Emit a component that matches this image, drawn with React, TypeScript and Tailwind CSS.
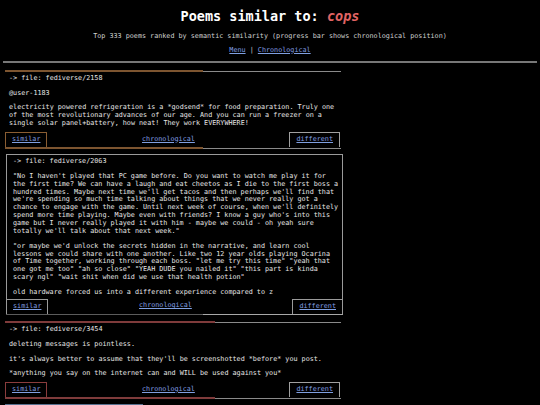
import React from "react";

const MONO = "font-['DejaVu_Sans_Mono','Liberation_Mono',monospace]";

function Bar({ pct, fill, track = "bg-[#8a8a8a]" }: { pct: number; fill: string; track?: string }) {
  return (
    <div className="flex h-[2px] items-end">
      <div className={`h-[2px] ${fill}`} style={{ width: `${pct}%` }} />
      <div className={`h-px flex-1 ${track}`} />
    </div>
  );
}

function Link({ children }: { children: React.ReactNode }) {
  return <a href="#" className="text-[#809fe0] underline underline-offset-[1px]">{children}</a>;
}

function Actions({ simBorder }: { simBorder: string }) {
  return (
    <div className="mt-[4px] flex h-[15px] items-stretch justify-between pr-[1px]">
      <span className={`flex items-center border-x border-t px-[6px] ${simBorder}`}>
        <Link>similar</Link>
      </span>
      <span className="flex items-center">
        <Link>chronological</Link>
      </span>
      <span className="flex items-center border-x border-t border-[#a0a0a0] px-[6px]">
        <Link>different</Link>
      </span>
    </div>
  );
}

export default function App() {
  return (
    <div className={`min-h-[405px] bg-black pb-[20px] text-[6.75px] leading-[7.86px] text-[#e6e6e6] ${MONO}`}>
      <header className="pt-[7px] text-center">
        <h1 className="text-[13.5px] font-bold leading-[18px] text-white">
          Poems similar to: <span className="italic text-[#e06464]">cops</span>
        </h1>
        <p className="mt-[8px] text-[#d0d0d0]">
          Top 333 poems ranked by semantic similarity (progress bar shows chronological position)
        </p>
        <nav className="mt-[6px]">
          <Link>Menu</Link> <span className="text-[#cfcfcf]">|</span> <Link>Chronological</Link>
        </nav>
      </header>
      <div className="mx-[3px] mt-[6px] h-[2px] bg-[#777]" />

      <main className="flex flex-col px-[5px]">
        {/* fediverse/2158 */}
        <article className="mt-[7px] w-[336px]">
          <Bar pct={58.9} fill="bg-[#7d5530]" />
          <div className="pl-[4px] pr-[5px] pt-[3px]">
            <p>-&gt; file: fediverse/2158</p>
            <p className="mt-[7px]">@user-1183</p>
            <p className="mt-[7px]">
              electricity powered refrigeration is a *godsend* for food preparation. Truly one of the most
              revolutionary advances of our age. And you can run a freezer on a single solar panel+battery, how
              neat! They work EVERYWHERE!
            </p>
          </div>
          <Actions simBorder="border-[#8a5d32]" />
          <Bar pct={58.9} fill="bg-[#7d5530]" />
        </article>

        {/* fediverse/2063, open entry */}
        <article className="ml-[1px] mt-[5px] w-[337px]">
          <div className="border-x border-t border-[#9a9a9a]">
            <div className="pl-[6px] pr-[2px] pt-[3px]">
              <p>-&gt; file: fediverse/2063</p>
              <p className="mt-[7px]">
                "No I haven't played that PC game before. Do you want to watch me play it for the first time? We
                can have a laugh and eat cheetos as I die to the first boss a hundred times. Maybe next time we'll
                get tacos and then perhaps we'll find that we're spending so much time talking about things that
                we never really got a chance to engage with the game. Until next week of course, when we'll
                definitely spend more time playing. Maybe even with friends? I know a guy who's into this game but
                I never really played it with him - maybe we could - oh yeah sure totally we'll talk about that
                next week."
              </p>
              <p className="mt-[7px]">
                "or maybe we'd unlock the secrets hidden in the narrative, and learn cool lessons we could share
                with one another. Like two 12 year olds playing Ocarina of Time together, working through each
                boss. "let me try this time" "yeah that one got me too" "ah so close" "YEAH DUDE you nailed it"
                "this part is kinda scary ngl" "wait shit when did we use that health potion"
              </p>
              <p className="mt-[7px]">old hardware forced us into a different experience compared to z</p>
            </div>
            <div className="mt-[2px] flex h-[15px] items-stretch justify-between">
              <span className="flex items-center border-r border-t border-[#9a9a9a] px-[6px]">
                <Link>similar</Link>
              </span>
              <span className="-ml-[10px] flex items-center">
                <Link>chronological</Link>
              </span>
              <span className="flex items-center border-l border-t border-[#9a9a9a] px-[6px]">
                <Link>different</Link>
              </span>
            </div>
          </div>
          <div className="flex h-px">
            <div className="h-px bg-[#5c5c5c]" style={{ width: "58.5%" }} />
            <div className="h-px flex-1 bg-[#a8a8a8]" />
          </div>
        </article>

        {/* fediverse/3454 */}
        <article className="mt-[6px] w-[336px]">
          <Bar pct={62.5} fill="bg-[#7f3b3b]" />
          <div className="pl-[4px] pr-[5px] pt-[3px]">
            <p>-&gt; file: fediverse/3454</p>
            <p className="mt-[7px]">deleting messages is pointless.</p>
            <p className="mt-[7px]">it's always better to assume that they'll be screenshotted *before* you post.</p>
            <p className="mt-[7px]">*anything you say on the internet can and WILL be used against you*</p>
          </div>
          <Actions simBorder="border-[#8a3c3c]" />
          <Bar pct={62.5} fill="bg-[#7f3b3b]" />
        </article>

        {/* next entry's progress bar */}
        <div className="mt-[5px] w-[336px]">
          <Bar pct={41} fill="bg-[#56708f]" />
        </div>
      </main>
    </div>
  );
}
